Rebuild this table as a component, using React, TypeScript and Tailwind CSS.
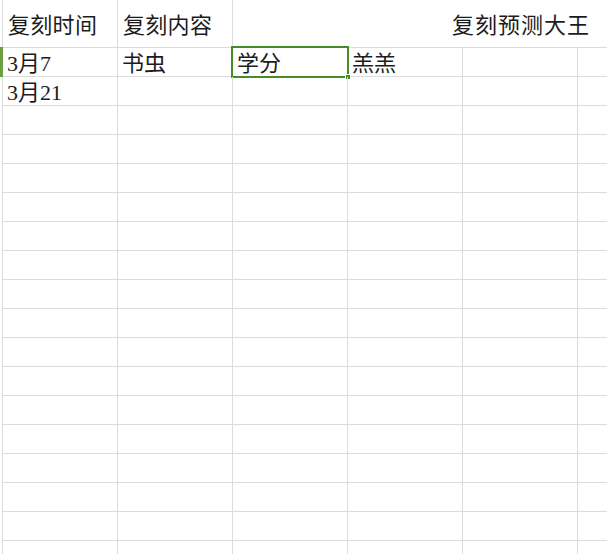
import React from "react";

const COLS = 6;
const ROWS = 18;

const data: Record<number, (string | null)[]> = {
  0: ["3月7", "书虫", "学分", "羔羔", null, null],
  1: ["3月21", null, null, null, null, null],
};

export default function App() {
  return (
    <div
      className="relative w-[607px] h-[554px] overflow-hidden bg-white text-[#1c1c1c]"
      style={{ fontFamily: '"Liberation Serif", "Noto Sans CJK SC", serif' }}
    >
      <div className="ml-[2px] border-l border-[#dcdcdc]">
        {/* header row */}
        <div className="grid grid-cols-[115px_115px_375px] h-[48px] border-b border-[#dcdcdc]">
          <div className="flex items-center pl-[5px] pt-[4px] border-r border-[#dcdcdc] text-[22px] leading-none tracking-[0.3px]">
            复刻时间
          </div>
          <div className="flex items-center pl-[5px] pt-[4px] border-r border-[#dcdcdc] text-[22px] leading-none tracking-[0.3px]">
            复刻内容
          </div>
          <div className="flex items-center pl-[219px] pt-[4px] text-[22px] leading-none tracking-[1px] whitespace-nowrap">
            复刻预测大王
          </div>
        </div>

        {Array.from({ length: ROWS }).map((_, r) => (
          <div
            key={r}
            className="grid grid-cols-[115px_115px_115px_115px_115px_115px] h-[29px] border-b border-[#dcdcdc]"
          >
            {Array.from({ length: COLS }).map((_, c) => {
              const v = data[r]?.[c] ?? null;
              const selected = r === 0 && c === 2;
              return (
                <div
                  key={c}
                  className="relative flex items-center pl-[4px] pt-[4px] border-r border-[#dcdcdc] text-[22px] leading-none whitespace-nowrap"
                >
                  {v}
                  {selected && (
                    <>
                      <div className="absolute left-[-2px] top-[-2px] w-[118px] h-[32px] border-2 border-[#478a28]" />
                      <div className="absolute left-[112px] top-[26px] w-[6px] h-[6px] bg-[#478a28] border border-white" />
                    </>
                  )}
                </div>
              );
            })}
          </div>
        ))}
      </div>

      {/* active row marker */}
      <div className="absolute left-0 top-[47px] w-[3px] h-[30px] bg-[#6b9e45]" />
    </div>
  );
}
